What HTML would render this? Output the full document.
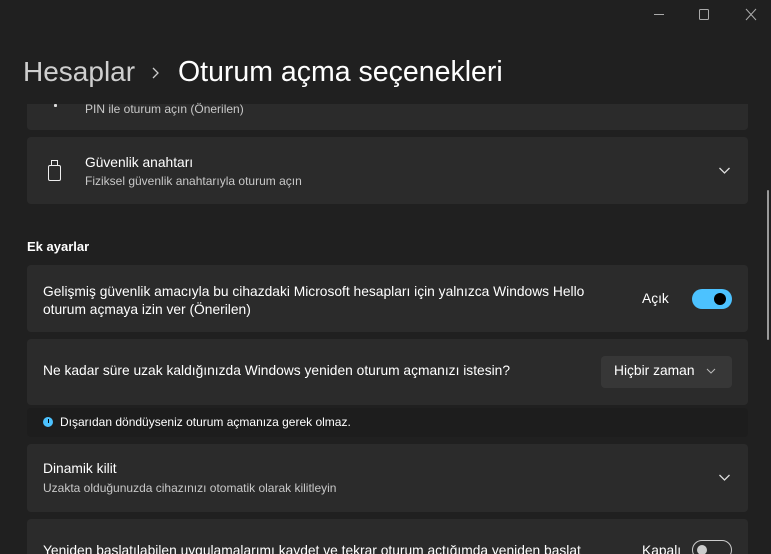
<!DOCTYPE html>
<html><head><meta charset="utf-8">
<style>
*{margin:0;padding:0;box-sizing:border-box}
html,body{width:771px;height:554px;overflow:hidden}
body{background:#202020;font-family:"Liberation Sans",sans-serif;color:#fff;position:relative}
.card{position:absolute;left:27px;width:721px;background:#2b2b2b;border-radius:4px}
.t{position:absolute;font-size:13.8px;color:#fff;white-space:nowrap}
.s{position:absolute;font-size:12px;color:#c8c8c8;white-space:nowrap}
.chev{position:absolute}
</style></head><body>
<div class="card" style="top:90px;height:40px"></div>
<div style="position:absolute;left:0;top:0;width:771px;height:104px;background:#202020"></div>
<svg style="position:absolute;left:650px;top:6px" width="120" height="18">
<line x1="4" y1="8.5" x2="14" y2="8.5" stroke="#aaa" stroke-width="1"/>
<rect x="49.5" y="3.5" width="9" height="10" rx="1" fill="none" stroke="#aaa"/>
<path d="M96 3 L106 14 M106 3 L96 14" stroke="#aaa" stroke-width="1"/>
</svg>
<div style="position:absolute;left:54px;top:104px;width:3px;height:3px;background:#ddd;border-radius:1px"></div>
<div class="s" style="left:85px;top:102px">PIN ile oturum açın (Önerilen)</div>

<div class="t" style="left:23px;top:56px;font-size:28px;color:#cfcfcf">Hesaplar</div>
<svg style="position:absolute;left:150px;top:66px" width="12" height="14"><path d="M3 2 L8 7 L3 12" fill="none" stroke="#ccc" stroke-width="1.3"/></svg>
<div class="t" style="left:178px;top:56px;font-size:28.5px">Oturum açma seçenekleri</div>

<div class="card" style="top:137px;height:67px"></div>
<svg style="position:absolute;left:47px;top:159px" width="16" height="24"><rect x="4.5" y="1.5" width="6" height="5" fill="none" stroke="#eee"/><rect x="1.5" y="6.5" width="12" height="15" rx="1.5" fill="none" stroke="#eee"/></svg>
<div class="t" style="left:85px;top:155px">Güvenlik anahtarı</div>
<div class="s" style="left:85px;top:174px">Fiziksel güvenlik anahtarıyla oturum açın</div>
<svg class="chev" style="left:718px;top:166px" width="14" height="10"><path d="M1.5 2 L6.5 7 L11.5 2" fill="none" stroke="#ddd" stroke-width="1.3"/></svg>

<div class="t" style="left:27px;top:239px;font-weight:bold;font-size:13px">Ek ayarlar</div>

<div class="card" style="top:265px;height:67px"></div>
<div class="t" style="left:43px;top:283px;line-height:18px">Gelişmiş güvenlik amacıyla bu cihazdaki Microsoft hesapları için yalnızca Windows Hello<br>oturum açmaya izin ver (Önerilen)</div>
<div class="t" style="left:642px;top:291px">Açık</div>
<div style="position:absolute;left:692px;top:289px;width:40px;height:20px;border-radius:10px;background:#4cc2ff"></div>
<div style="position:absolute;left:714px;top:293px;width:12px;height:12px;border-radius:6px;background:#000"></div>

<div class="card" style="top:339px;height:66px"></div>
<div class="t" style="left:43px;top:363px">Ne kadar süre uzak kaldığınızda Windows yeniden oturum açmanızı istesin?</div>
<div style="position:absolute;left:601px;top:356px;width:131px;height:32px;border-radius:4px;background:#373737"></div>
<div class="t" style="left:614px;top:363px">Hiçbir zaman</div>
<svg class="chev" style="left:706px;top:367px" width="10" height="8"><path d="M1 2 L5 6 L9 2" fill="none" stroke="#bbb" stroke-width="1"/></svg>

<div style="position:absolute;left:27px;top:408px;width:721px;height:29px;background:#1d1d1d;border-radius:4px"></div>
<div style="position:absolute;left:43px;top:417px;width:10px;height:10px;border-radius:5px;background:#4cc2ff"></div>
<div style="position:absolute;left:47.5px;top:419px;width:1px;height:4px;background:#000"></div>
<div class="s" style="left:60px;top:415px;color:#fff">Dışarıdan döndüyseniz oturum açmanıza gerek olmaz.</div>

<div class="card" style="top:444px;height:68px"></div>
<div class="t" style="left:43px;top:461px">Dinamik kilit</div>
<div class="s" style="left:43px;top:481px">Uzakta olduğunuzda cihazınızı otomatik olarak kilitleyin</div>
<svg class="chev" style="left:718px;top:473px" width="14" height="10"><path d="M1.5 2 L6.5 7 L11.5 2" fill="none" stroke="#ddd" stroke-width="1.3"/></svg>

<div class="card" style="top:519px;height:60px"></div>
<div class="t" style="left:43px;top:543px">Yeniden başlatılabilen uygulamalarımı kaydet ve tekrar oturum açtığımda yeniden başlat</div>
<div class="t" style="left:642px;top:543px">Kapalı</div>
<div style="position:absolute;left:692px;top:540px;width:40px;height:20px;border-radius:10px;border:1px solid #ccc"></div>
<div style="position:absolute;left:697px;top:545px;width:10px;height:10px;border-radius:5px;background:#ccc"></div>

<div style="position:absolute;left:767px;top:190px;width:2px;height:150px;background:#9a9a9a;border-radius:1px"></div>
</body></html>
